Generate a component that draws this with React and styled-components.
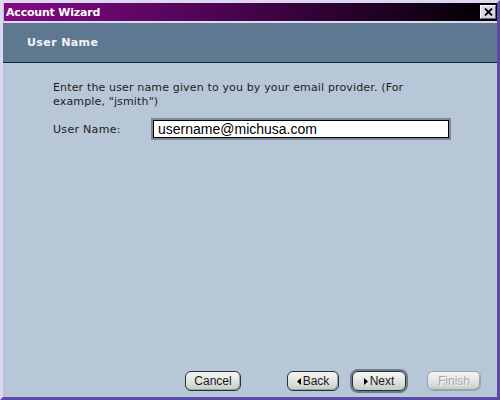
import React from "react";
import styled, { createGlobalStyle } from "styled-components";

const GlobalStyle = createGlobalStyle`
  html, body {
    margin: 0;
    padding: 0;
    background: #b8c7d7;
  }
`;

export default function App() {
  return (
    <>
      <GlobalStyle />
      <Window>
        <TitleBar>
          <Title>Account Wizard</Title>
          <CloseButton aria-label="close">
            <svg width="9" height="8" viewBox="0 0 9 8">
              <path d="M1 0.5 L8 7.5 M8 0.5 L1 7.5" stroke="#000" strokeWidth="1.8" />
            </svg>
          </CloseButton>
        </TitleBar>
        <Header>User Name</Header>
        <Content>
          <Intro>
            Enter the user name given to you by your email provider. (For
            <br />
            example, "jsmith")
          </Intro>
          <FieldRow>
            <Label>User Name:</Label>
            <TextInput defaultValue="username@michusa.com" />
          </FieldRow>
        </Content>
        <Footer>
          <WizardButton $width={56}>Cancel</WizardButton>
          <WizardButton $width={52} $gap={46}>
            <Arrow viewBox="0 0 4 7">
              <path d="M4 0 L0 3.5 L4 7 Z" />
            </Arrow>
            Back
          </WizardButton>
          <WizardButton $width={54} $gap={13} $focused>
            <Arrow viewBox="0 0 4 7">
              <path d="M0 0 L4 3.5 L0 7 Z" />
            </Arrow>
            Next
          </WizardButton>
          <WizardButton $width={54} $gap={21} disabled>
            Finish
          </WizardButton>
        </Footer>
      </Window>
    </>
  );
}

const Window = styled.div`
  box-sizing: border-box;
  width: 500px;
  height: 400px;
  display: flex;
  flex-direction: column;
  background: #b8c7d7;
  border-top: 3px solid #dcd8f2;
  border-left: 3px solid #dcd8f2;
  border-right: 3px solid #5a4ca6;
  border-bottom: 3px solid #5a4ca6;
  font-family: "DejaVu Sans", Verdana, sans-serif;
`;

const TitleBar = styled.div`
  height: 18px;
  margin-left: 1px;
  display: flex;
  align-items: center;
  justify-content: space-between;
  padding: 0 1px 0 2px;
  background: linear-gradient(90deg, #820a84 0%, #4a0450 45%, #000000 100%);
  border-bottom: 2px solid #dcd8f2;
`;

const Title = styled.span`
  color: #ffffff;
  font-family: Tahoma, "DejaVu Sans", sans-serif;
  font-weight: bold;
  font-size: 11px;
  letter-spacing: -0.2px;
`;

const CloseButton = styled.button`
  width: 16px;
  height: 14px;
  padding: 0;
  display: flex;
  align-items: center;
  justify-content: center;
  background: #d6d6e4;
  border: 1px solid;
  border-color: #ffffff #606070 #606070 #ffffff;
`;

const Header = styled.div`
  height: 39px;
  display: flex;
  align-items: center;
  padding-left: 24px;
  background: #5f7892;
  border-bottom: 1px solid #1a2430;
  color: #f4f4f8;
  font-weight: bold;
  font-size: 11px;
  letter-spacing: 0.4px;
`;

const Content = styled.div`
  flex: 1;
  padding: 18px 0 0 50px;
  color: #1c1c1c;
  font-size: 11px;
`;

const Intro = styled.p`
  margin: 0 0 11px;
  line-height: 14px;
  letter-spacing: 0.15px;
`;

const FieldRow = styled.div`
  display: flex;
  align-items: center;
`;

const Label = styled.span`
  width: 100px;
  letter-spacing: 0.3px;
`;

const TextInput = styled.input`
  box-sizing: border-box;
  width: 296px;
  height: 18px;
  padding: 0 4px;
  background: #ffffff;
  border: 1px solid #000000;
  box-shadow: 0 0 0 2px #7c8896;
  font-family: "Liberation Sans", Arial, sans-serif;
  font-size: 14px;
  color: #000000;
  outline: none;
`;

const Footer = styled.div`
  display: flex;
  align-items: center;
  padding: 0 0 6px 182px;
`;

const WizardButton = styled.button`
  box-sizing: border-box;
  flex: none;
  width: ${(p) => p.$width}px;
  height: 20px;
  margin-left: ${(p) => p.$gap || 0}px;
  padding: 0;
  display: flex;
  align-items: center;
  justify-content: center;
  border-radius: 6px;
  border: 1px solid ${(p) => (p.disabled ? "#98a2ae" : "#2a2f36")};
  background: linear-gradient(180deg, #f4f6f4 0%, #dfe3df 55%, #c3c9c6 100%);
  box-shadow: ${(p) =>
    p.$focused ? "0 0 0 2px #6e7c8c" : "inset -1px -1px 0 #9aa4a0"};
  font-family: "Liberation Sans", Arial, sans-serif;
  font-size: 12px;
  color: ${(p) => (p.disabled ? "#a2abb4" : "#1a1a1a")};
  text-shadow: ${(p) => (p.disabled ? "1px 1px 0 #f4f6f6" : "none")};
`;

const Arrow = styled.svg`
  width: 4px;
  height: 7px;
  margin-right: 2px;
  fill: #000000;
`;
